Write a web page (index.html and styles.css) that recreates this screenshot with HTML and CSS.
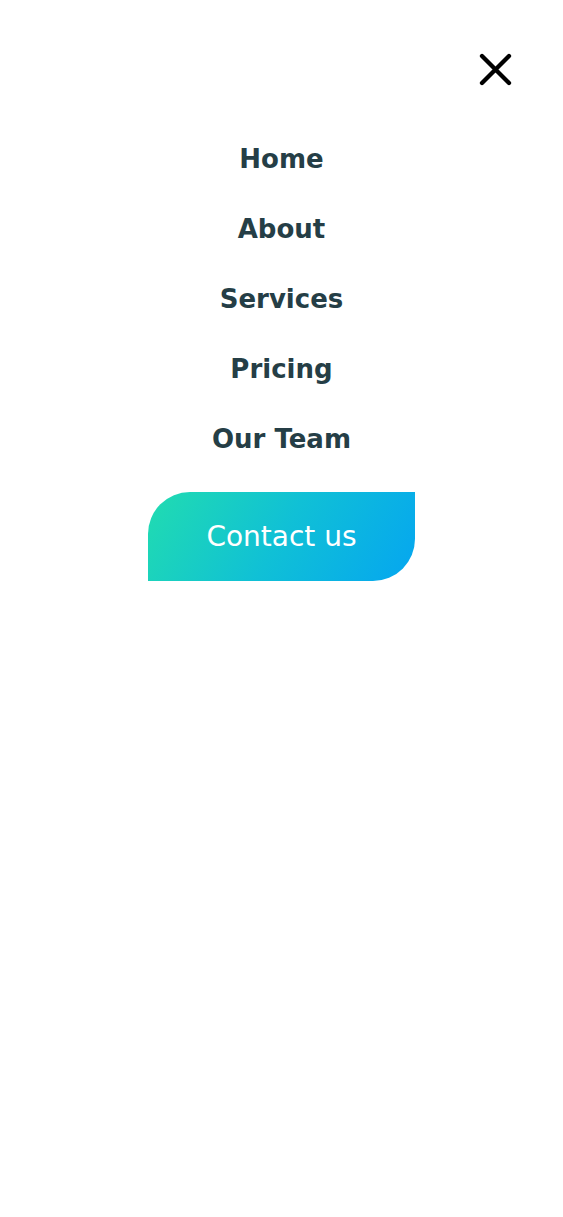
FILE: index.html
```html
<!DOCTYPE html>
<html lang="en">
<head>
<meta charset="utf-8">
<title>Menu</title>
<link rel="stylesheet" href="styles.css">
</head>
<body>
<div class="menu">
  <div class="topbar">
    <button class="close" aria-label="Close menu">
      <svg width="36" height="36" viewBox="0 0 36 36"><path d="M5 5 L32 32 M32 5 L5 32" stroke="#000" stroke-width="4.3" stroke-linecap="round" fill="none"/></svg>
    </button>
  </div>
  <nav class="links">
    <a href="#">Home</a>
    <a href="#">About</a>
    <a href="#">Services</a>
    <a href="#">Pricing</a>
    <a href="#">Our Team</a>
  </nav>
  <div class="cta-wrap">
    <a class="cta" href="#">Contact us</a>
  </div>
</div>
</body>
</html>
```
FILE: styles.css
```css
html, body {
  margin: 0;
  padding: 0;
  background: #fff;
}
body {
  font-family: "DejaVu Sans", sans-serif;
}
.menu {
  display: flex;
  flex-direction: column;
  align-items: center;
}
.topbar {
  align-self: stretch;
  display: flex;
  justify-content: flex-end;
  padding: 51px 50px 0 0;
}
.close {
  border: 0;
  background: none;
  padding: 0;
  width: 36px;
  height: 36px;
  display: block;
}
.close svg { display: block; }
.links {
  display: flex;
  flex-direction: column;
  align-items: center;
  gap: 40px;
  margin-top: 57px;
}
.links a {
  color: #253e46;
  text-decoration: none;
  font-weight: 700;
  font-size: 26px;
  line-height: 30px;
}
.cta-wrap {
  margin-top: 38px;
}
.cta {
  display: flex;
  align-items: center;
  justify-content: center;
  width: 267px;
  height: 89px;
  border-radius: 42px 0 42px 0;
  background: linear-gradient(120deg, #21dcb0 0%, #10c0d6 50%, #05a6f0 100%);
  color: #fff;
  text-decoration: none;
  font-size: 28px;
  font-weight: 400;
}
```
